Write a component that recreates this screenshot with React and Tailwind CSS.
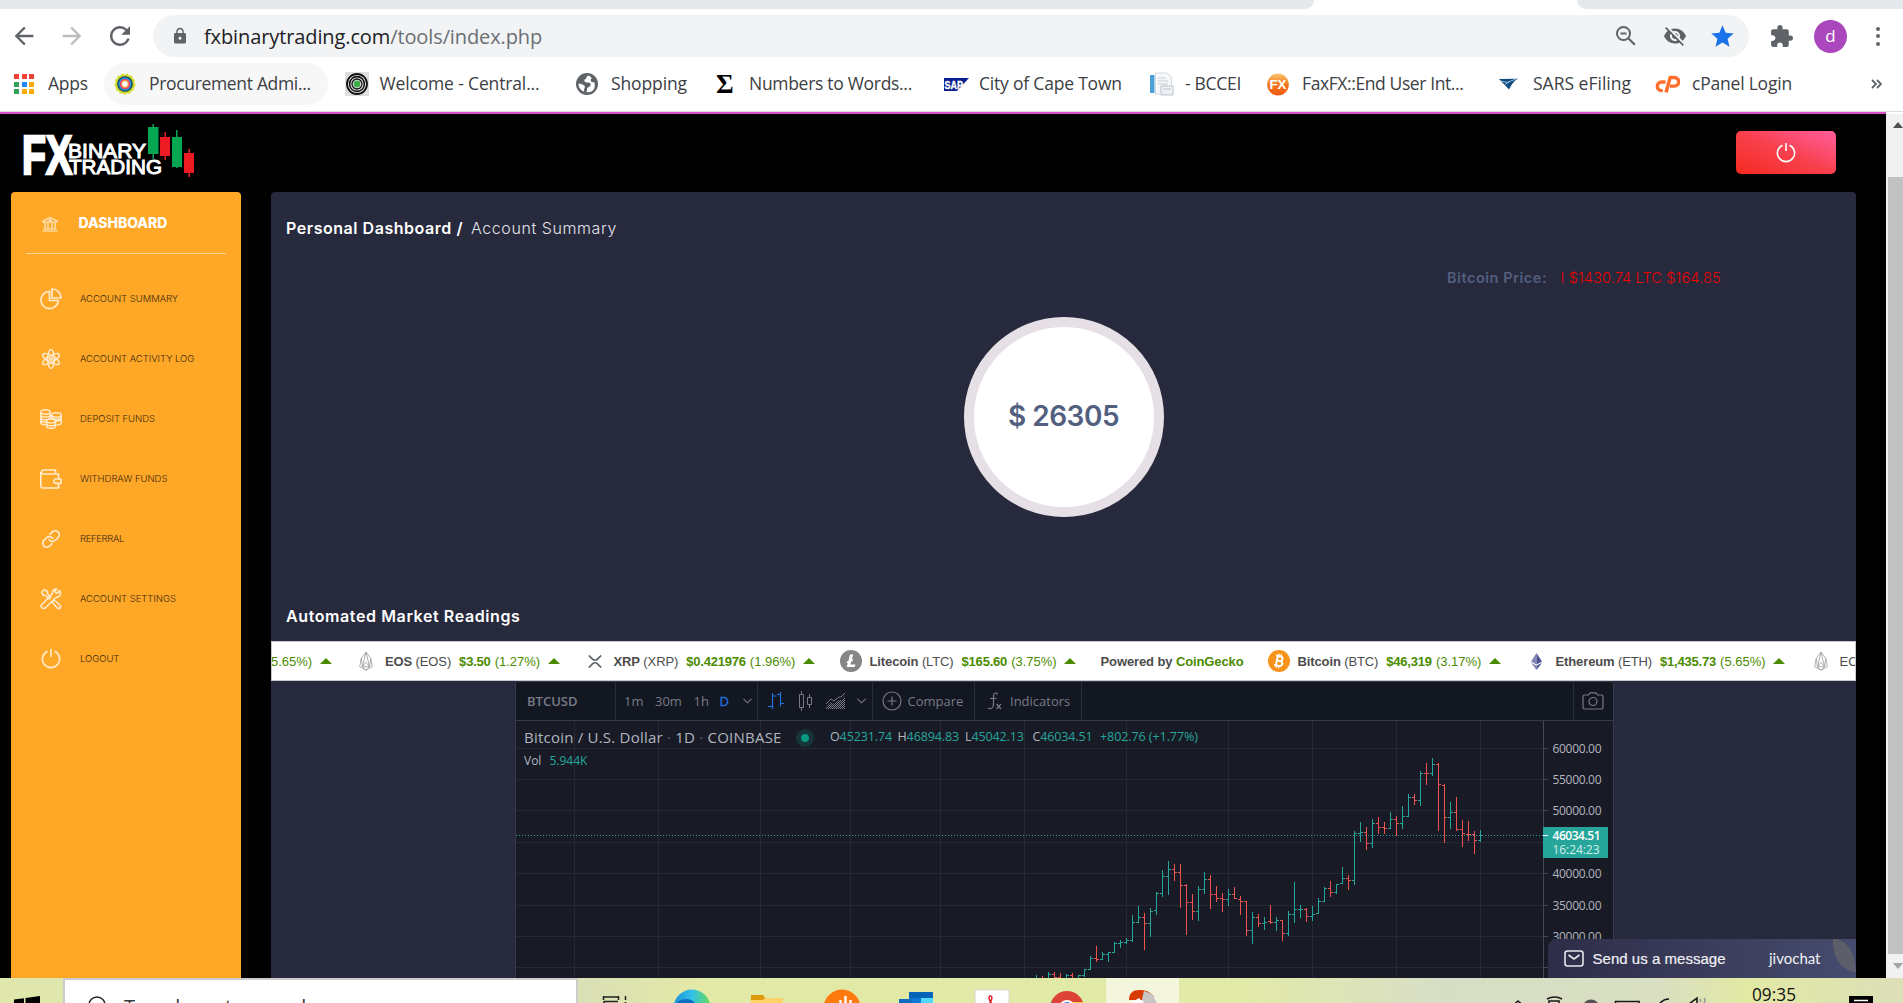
import React from "react";
import { MdLock, MdStar, MdExtension, MdVisibilityOff, MdArrowBack, MdArrowForward, MdRefresh } from "react-icons/md";

/* ---------- browser chrome ---------- */

const AppsIcon = () => (
  <svg width="20" height="20" viewBox="0 0 20 20" shapeRendering="crispEdges" className="ml-[1px]">
    {["#f44336", "#f44336", "#ea4335", "#34a05a", "#1e88f5", "#fbab05", "#34a05a", "#fbab05", "#fbab05"].map((c, i) => (
      <rect key={i} x={(i % 3) * 7.5} y={Math.floor(i / 3) * 7.5} width="5" height="5" fill={c} />
    ))}
  </svg>
);

const FlowerIcon = () => (
  <svg width="22" height="24" viewBox="0 0 24 24">
    <circle cx="12" cy="12" r="10.5" fill="#c6d420" stroke="#d9e233" strokeWidth="2" strokeDasharray="3 2" />
    <circle cx="12" cy="12" r="8.5" fill="#17466b" />
    <circle cx="12" cy="12" r="7" fill="#1ba5d8" />
    <circle cx="12" cy="12" r="5.8" fill="#e5397c" />
    <circle cx="12" cy="12" r="4.3" fill="#f7a348" />
    <circle cx="12" cy="12" r="2.9" fill="#fff" />
  </svg>
);

const RingsIcon = () => (
  <svg width="24" height="24" viewBox="0 0 24 24">
    <rect width="24" height="24" fill="#dedede" />
    <circle cx="12" cy="12" r="10" fill="#eee" stroke="#111" strokeWidth="1.8" />
    <circle cx="12" cy="12" r="7.4" fill="none" stroke="#111" strokeWidth="1.6" />
    <circle cx="12" cy="12" r="5" fill="none" stroke="#111" strokeWidth="1.3" />
    <circle cx="12" cy="12" r="3.4" fill="#3fae49" />
  </svg>
);

const GlobeIcon = () => (
  <svg width="22" height="22" viewBox="0 0 22 22">
    <circle cx="11" cy="11" r="11" fill="#5f6368" />
    <path d="M12.500 2.600c-2 .8-2.500 2-2.200 3.200-1.600.2-2.300 1-1.900 2.300.5 1.300 2 1.600 4 1.500 1.600 0 2.200.9 2.200 2.200 0 1.400-1 2-2.300 2.400-1 .4-1.300 1.300-1.200 2.400l-.6 2.600c3.800.6 6.700-1.300 7.800-4 .8-2.200.7-4-.2-6.200-1.400.4-2.800.3-3.200-.7-.5-1.400 0-2.400 1-3-1-1.300-2.200-2.200-3.400-2.700z" fill="#fff" />
    <path d="M2.600 10.400c2.400.2 4.300.9 5.600 2.200.9 1 .8 2 .2 2.800-.5.700-.3 1.800-.2 3.200-3.500-1.300-5.800-4.200-5.600-8.200z" fill="#fff" />
  </svg>
);

const SapIcon = () => (
  <svg width="25" height="13" viewBox="0 0 25 13">
    <path d="M0 0h25L13 13H0z" fill="#0a1f8f" />
    <text x="0.5" y="10.6" fontFamily="Liberation Sans, sans-serif" fontWeight="700" fontSize="11" fill="#fff" stroke="#fff" strokeWidth="0.3" textLength="18.5" lengthAdjust="spacingAndGlyphs">SAP</text>
  </svg>
);

const DocIcon = () => (
  <svg width="24" height="24" viewBox="0 0 24 24">
    <path d="M0 3h4.500v18H0z" fill="#4ba0d6" />
    <path d="M5.500 1h11l5 4v17h-16z" fill="#f5f7f9" stroke="#d3dae0" />
    <path d="M8 6h8M8 9h10M8 12h10" stroke="#c6ced6" />
    <path d="M11 14h12v9H11z" fill="#eef1f4" stroke="#b9c3cc" />
    <path d="M13 17h8" stroke="#b9c3cc" />
  </svg>
);

const FxIcon = () => (
  <svg width="22" height="23" viewBox="0 0 22 23">
    <defs>
      <linearGradient id="fxg" x1="0" y1="0" x2="0" y2="1">
        <stop offset="0" stopColor="#fbc46a" />
        <stop offset="0.55" stopColor="#f2711f" />
        <stop offset="1" stopColor="#ee5a12" />
      </linearGradient>
    </defs>
    <ellipse cx="11" cy="11.5" rx="10.8" ry="11" fill="url(#fxg)" />
    <text x="2.5" y="16" fontFamily="Liberation Sans, sans-serif" fontWeight="700" fontSize="12" fill="#fff" textLength="17" lengthAdjust="spacingAndGlyphs">FX</text>
  </svg>
);

const SarsIcon = () => (
  <svg width="21" height="12" viewBox="0 0 21 12" className="ml-[1px]">
    <path d="M0 1l19-.2c-3.500 1.500-6 5-9 10.700z" fill="#0e4c82" />
    <path d="M2 3l6 1.500 9-3.500M6 6.500l5-3" fill="none" stroke="#9fc3df" strokeWidth="0.9" />
  </svg>
);

const CpIcon = () => (
  <svg width="25" height="18" viewBox="0 0 25 18" fill="none" stroke="#ff6c2c" strokeWidth="3.4" className="-ml-[2px]">
    <path d="M10.500 7H6.600a4.300 4.300 0 0 0 0 8.600h1.200M11 17.500l4.200-15h4.200a4 4 0 0 1 0 8.600h-4.400" />
  </svg>
);

const BOOKMARKS = [
  { w: "w-[101px]", t: "tracking-[-0.21px]", label: "Apps", icon: <AppsIcon /> },
  { w: "w-[230.5px]", t: "tracking-[-0.33px]", label: "Procurement Admi...", icon: <FlowerIcon />, pill: true },
  { w: "w-[231.5px]", t: "tracking-[-0.15px]", label: "Welcome - Central...", icon: <RingsIcon /> },
  { w: "w-[138px]", t: "tracking-[-0.12px]", label: "Shopping", icon: <GlobeIcon /> },
  { w: "w-[230px]", t: "tracking-[-0.3px]", label: "Numbers to Words...", icon: <span className="pl-[2px] font-['Liberation_Serif',serif] text-[27px] font-bold leading-none text-black">Σ</span> },
  { w: "w-[206px]", t: "tracking-[-0.2px]", label: "City of Cape Town", icon: <SapIcon /> },
  { w: "w-[117px]", t: "tracking-[-0.3px]", label: "- BCCEI", icon: <DocIcon /> },
  { w: "w-[231px]", t: "tracking-[-0.4px]", label: "FaxFX::End User Int...", icon: <FxIcon /> },
  { w: "w-[159px]", t: "tracking-normal", label: "SARS eFiling", icon: <SarsIcon /> },
  { w: "w-[214px]", t: "tracking-[-0.21px]", label: "cPanel Login", icon: <CpIcon /> },
];

function BrowserBar() {
  return (
    <header className="h-[114px] bg-white font-['Open_Sans',sans-serif]">
      <div className="flex h-[9px] justify-between">
        <div className="w-[1314px] rounded-br-[9px] bg-[#e6e9ec]" />
        <div className="w-[326px] rounded-bl-[9px] bg-[#e6e9ec]" />
      </div>
      <div className="mt-[6px] flex h-[42px] items-center">
        <div className="flex w-[153px] items-center pl-[10px]">
          <MdArrowBack size={28} color="#5f6368" />
          <MdArrowForward size={28} color="#babcbe" className="ml-[20px]" />
          <MdRefresh size={30} color="#5f6368" className="ml-[19px]" />
        </div>
        <div className="flex h-full w-[1596px] items-center rounded-full bg-[#f1f3f4] pl-[18px] pr-[13px]">
          <MdLock size={18} color="#5f6368" />
          <span className="ml-[15px] mt-[2px] flex-1 text-[20px] leading-none tracking-[-0.11px] text-[#202124]">
            fxbinarytrading.com<span className="text-[#6b6f74]">/tools/index.php</span>
          </span>
          <svg width="22" height="22" viewBox="0 0 22 22" fill="none" stroke="#5f6368" strokeWidth="2">
            <circle cx="8.5" cy="8.5" r="6.5" />
            <path d="M13.3 13.3l6.5 6.5M5.5 8.5h6" />
          </svg>
          <MdVisibilityOff size={24} color="#5f6368" className="ml-[26px]" />
          <MdStar size={27} color="#1a73e8" className="ml-[22px]" />
        </div>
        <MdExtension size={25} color="#5f6368" className="ml-[20px]" />
        <div className="ml-[20px] flex h-[33px] w-[33px] items-center justify-center rounded-full bg-[#ab47bc] pb-[1px] text-[17px] leading-none text-white">d</div>
        <div className="ml-[29px] flex flex-col gap-[3.5px]">
          <i className="h-[4px] w-[4px] rounded-full bg-[#5f6368]" />
          <i className="h-[4px] w-[4px] rounded-full bg-[#5f6368]" />
          <i className="h-[4px] w-[4px] rounded-full bg-[#5f6368]" />
        </div>
      </div>
      <div className="mt-[6px] flex h-[42px] items-center pl-[13px]">
        {BOOKMARKS.map((b) => (
          <div key={b.label} className={`flex shrink-0 items-center ${b.w}`}>
            <div className={b.pill ? "-ml-[10px] flex h-[42px] w-[224px] shrink-0 items-center rounded-full bg-[#f7f7f8] pl-[10px]" : "flex items-center"}>
              <span className="flex w-[35px] shrink-0 items-center">{b.icon}</span>
              <span className={`whitespace-nowrap text-[17.5px] leading-none text-[#3c4043] ${b.t}`}>{b.label}</span>
            </div>
          </div>
        ))}
        <svg width="11" height="10" viewBox="0 0 11 10" fill="none" stroke="#5f6368" strokeWidth="1.8">
          <path d="M1 1l4 4-4 4M6 1l4 4-4 4" />
        </svg>
      </div>
      <div className="mt-[6px] h-px bg-[#dcdcdc]" />
      <div className="h-[2px] w-[1886px] bg-[#d94fc8]" />
    </header>
  );
}

/* ---------- top bar ---------- */

const Logo = () => (
  <svg width="176" height="54" viewBox="20 124 176 54">
    <g fill="#fff" stroke="#fff" fontFamily="Liberation Sans, sans-serif">
      <text x="22" y="174" fontSize="55" fontWeight="700" strokeWidth="2.600" textLength="50" lengthAdjust="spacingAndGlyphs">FX</text>
      <text x="68" y="158" fontSize="20" strokeWidth="1" textLength="78" lengthAdjust="spacingAndGlyphs">BINARY</text>
      <text x="69" y="174" fontSize="20" strokeWidth="1" textLength="93" lengthAdjust="spacingAndGlyphs">TRADING</text>
    </g>
    <g fill="#04a651">
      <path d="M148 127h10.500v27H148zM152.500 124h1.500v35h-1.500z" />
      <path d="M172 137h10v30h-10zM176 130h1.500v38H176z" />
    </g>
    <g fill="#ed1c24">
      <path d="M160 137h10v19h-10zM164.500 132h1.500v28h-1.500z" />
      <path d="M184 153h10v20h-10zM188.500 149h1.500v28h-1.500z" />
    </g>
  </svg>
);

const Power = ({ size, stroke }) => (
  <svg width={size} height={size} viewBox="0 0 20 20" fill="none" stroke={stroke} strokeWidth="1.6">
    <path d="M10 0v8M6.500 2.200a8.600 8.600 0 1 0 7 0" />
  </svg>
);

function TopBar() {
  return (
    <div className="flex h-[78px] justify-between pl-[20px] pr-[50px]">
      <div className="pt-[10px]"><Logo /></div>
      <button className="mt-[17px] flex h-[43px] w-[100px] items-center justify-center rounded-[5px] bg-linear-to-tr from-[#f5281a] via-[#f8404c] to-[#ff5c9c] pr-[1px] pt-[1px]">
        <Power size={20} stroke="#fff" />
      </button>
    </div>
  );
}

/* ---------- sidebar ---------- */

const line = { fill: "none", stroke: "#ffebcd", strokeWidth: 1.7, strokeLinejoin: "round" };

const BankIcon = () => (
  <svg width="16" height="15" viewBox="0 0 16 15" {...line} strokeWidth="1.2">
    <path d="M1 5V4l7-3.500L15 4v1zM3 5.500v6M6 5.500v6M10 5.500v6M13 5.500v6M1.500 12h13M.5 14h15" />
    <circle cx="8" cy="3.300" r="0.900" />
  </svg>
);
const PieIcon = () => (
  <svg width="22" height="22" viewBox="0 0 22 22" {...line}>
    <path d="M9.500 3.300A8.700 8.700 0 1 0 18.300 12.500H9.500zM12 1v9h9a9 9 0 0 0-9-9z" />
  </svg>
);
const AtomIcon = () => (
  <svg width="22" height="22" viewBox="0 0 22 22" {...line} strokeWidth="1.5">
    <ellipse cx="11" cy="11" rx="3.300" ry="9.500" />
    <ellipse cx="11" cy="11" rx="3.300" ry="9.500" transform="rotate(60 11 11)" />
    <ellipse cx="11" cy="11" rx="3.300" ry="9.500" transform="rotate(120 11 11)" />
    <circle cx="11" cy="11" r="1.300" />
  </svg>
);
const CoinsIcon = () => (
  <svg width="22" height="20" viewBox="0 0 22 20" {...line} strokeWidth="1.5">
    <ellipse cx="5.500" cy="3" rx="4.700" ry="2.200" />
    <path d="M.8 3v10.500c0 1.300 2 2.300 4.700 2.300M10.200 3v7M.8 5.700c0 3 9.400 3 9.400 0M.8 8.400c0 3 9.400 3 9.400 0M.8 11c0 2 3 2.300 5 2" />
    <ellipse cx="16.500" cy="6" rx="4.700" ry="2.200" />
    <path d="M21.200 6v7.700c0 1.300-2 2.300-4.700 2.300M11.800 6v4M11.800 8.500c1 2.500 9.400 2.500 9.400 0M14 11.800c3 .6 7.200 0 7.200-1.500" />
    <ellipse cx="11" cy="12" rx="4.500" ry="2" />
    <path d="M6.500 12v5c0 3 9 3 9 0v-5M6.500 14.500c0 3 9 3 9 0" />
  </svg>
);
const WalletIcon = () => (
  <svg width="22" height="20" viewBox="0 0 22 20" {...line} strokeWidth="1.6">
    <path d="M15.500 4V1H3a2.100 2.100 0 0 0 0 4h15.500v5M18.500 14.500v4.500H3A2.200 2.200 0 0 1 .8 16.800V3" />
    <path d="M21 10h-5a2.200 2.200 0 0 0 0 4.400h5z" />
  </svg>
);
const LinkIcon = () => (
  <svg width="22" height="22" viewBox="0 0 22 22" {...line}>
    <g transform="rotate(-45 11 11)">
      <path d="M9 15H5a4 4 0 0 1 0-8h3.800a4 4 0 0 1 3.700 5.400" />
      <path d="M13 7h4a4 4 0 0 1 0 8h-3.800a4 4 0 0 1-3.700-5.400" />
    </g>
  </svg>
);
const ToolsIcon = () => (
  <svg width="22" height="22" viewBox="0 0 22 22" {...line} strokeWidth="1.6">
    <path d="M1.500 4.200L4.200 1.500l3.300 2v2.200L11 9.300 9.300 11 5.700 7.500H3.500z" />
    <path d="M14 12l6 5.200a1.900 1.900 0 0 1-2.700 2.700L12 14.200z" />
    <path d="M19.800 2.600l-2.700 2.500-1.800-.5L15 2.900 17 1.200c-3-.6-5.300 1.700-4.500 4.400L2 16.200a2.400 2.400 0 0 0 3.500 3.500L16.200 9.200c3.300.6 5.300-3 3.600-6.600z" />
  </svg>
);

const MENU = [
  ["ACCOUNT SUMMARY", <PieIcon />],
  ["ACCOUNT ACTIVITY LOG", <AtomIcon />],
  ["DEPOSIT FUNDS", <CoinsIcon />],
  ["WITHDRAW FUNDS", <WalletIcon />],
  ["REFERRAL", <LinkIcon />, "tracking-[-0.35px]"],
  ["ACCOUNT SETTINGS", <ToolsIcon />],
  ["LOGOUT", <Power size={20} stroke="#ffebcd" />],
];

function Sidebar() {
  return (
    <nav className="w-[230px] shrink-0 rounded-t-[4px] bg-[#ffa726] font-['Inter',sans-serif]">
      <div className="mx-[15px] flex h-[62px] items-center border-b border-[#ffd79c] pl-[16px]">
        <span className="mt-[3px]"><BankIcon /></span>
        <span className="ml-[20.500px] mt-[1px] text-[14px] font-extrabold leading-none tracking-[-0.05px] text-white">DASHBOARD</span>
      </div>
      <div className="pt-[15px]">
        {MENU.map(([label, icon, tracking]) => (
          <div key={label} className="flex h-[60px] items-center">
            <span className="ml-[29px] flex w-[22px] justify-center">{icon}</span>
            <span className={`ml-[18px] text-[9.5px] font-light leading-none text-[#3d2a10] ${tracking || "tracking-[-0.04px]"}`}>{label}</span>
          </div>
        ))}
      </div>
    </nav>
  );
}

/* ---------- ticker ---------- */

const EosIcon = () => (
  <svg width="14" height="22" viewBox="0 0 16 22" fill="none" stroke="#9a9a9a" strokeWidth="0.9">
    <path d="M8 .7L2.500 8 .8 17.500 8 21.500l7.200-4L13.500 8zM8 .7L4 17.500M8 .7l4 16.800M2.500 8L4 17.500l4 4M13.500 8L12 17.500l-4 4M4 17.500l4-5 4 5z" />
  </svg>
);
const XrpIcon = () => (
  <svg width="14" height="13" viewBox="0 0 14 13" fill="none" stroke="#5d6266" strokeWidth="1.7">
    <path d="M.8.5l3.700 3.700a3.500 3.500 0 0 0 5 0L13.200.5M.8 12.500l3.700-3.700a3.500 3.500 0 0 1 5 0l3.700 3.700" />
  </svg>
);
const LtcIcon = () => (
  <svg width="22" height="22" viewBox="0 0 22 22">
    <circle cx="11" cy="11" r="11" fill="#868686" />
    <path d="M10 4.500h3.200l-1.500 5.300 1.600-.7-.5 1.800-1.600.7-.8 2.900h5l-.6 2.500H6.700l1.200-4.300-1.400.6.500-1.900 1.400-.5z" fill="#fff" />
  </svg>
);
const BtcIcon = () => (
  <svg width="22" height="22" viewBox="0 0 22 22">
    <circle cx="11" cy="11" r="11" fill="#f7931a" />
    <g fill="none" stroke="#fff" strokeWidth="1.900" transform="rotate(12 11 11)">
      <path d="M7 6.200h4.700a2.300 2.300 0 0 1 0 4.600H8.800V6M8.800 10.800h3.500a2.500 2.500 0 0 1 0 5H7M8.800 10v6" />
      <path d="M9.500 3.800v2.500M12 3.800v2.500M9.500 15.800v2.500M12 15.800v2.500" strokeWidth="1.300" />
    </g>
  </svg>
);
const EthIcon = () => (
  <svg width="11" height="17" viewBox="0 0 11 17">
    <path d="M5.500 0v11.500L0 8.500z" fill="#8087b5" />
    <path d="M5.500 0v11.500l5.500-3z" fill="#4b5190" />
    <path d="M0 9.700l5.500 3V17z" fill="#8087b5" />
    <path d="M11 9.700l-5.500 3V17z" fill="#4b5190" />
  </svg>
);
const Up = () => (
  <svg width="12" height="6" viewBox="0 0 12 6" className="ml-[7.500px]">
    <path d="M0 6l6-6 6 6z" fill="#4b8b00" />
  </svg>
);

const Coin = ({ w, icon, name, sym, price, pct }) => (
  <div className={`flex shrink-0 items-center ${w}`}>
    <span className="mr-[8px] flex w-[22px] shrink-0 justify-center">{icon}</span>
    <span className="tracking-[-0.12px]"><b>{name}</b> ({sym})</span>
    <b className="ml-[8px] tracking-[-0.2px] text-[#4b8b00]">{price}</b>
    <span className="ml-[4px] text-[#4b8b00]">({pct}%)</span>
    <Up />
  </div>
);

function Ticker() {
  return (
    <div className="flex h-[40px] items-center overflow-hidden whitespace-nowrap border border-[#c9c9cf] bg-white font-['Liberation_Sans',sans-serif] text-[13px] leading-none text-[#4c4c4c]">
      <div className="-ml-px flex w-[84px] shrink-0 items-center text-[#4b8b00]">5.65%)<Up /></div>
      <Coin w="w-[228.5px]" icon={<EosIcon />} name="EOS" sym="EOS" price="$3.50" pct="1.27" />
      <Coin w="w-[256px]" icon={<XrpIcon />} name="XRP" sym="XRP" price="$0.421976" pct="1.96" />
      <Coin w="w-[261px]" icon={<LtcIcon />} name="Litecoin" sym="LTC" price="$165.60" pct="3.75" />
      <div className="w-[167px] shrink-0 font-bold tracking-[-0.11px]">Powered by <span className="text-[#4b8b00]">CoinGecko</span></div>
      <Coin w="w-[258px]" icon={<BtcIcon />} name="Bitcoin" sym="BTC" price="$46,319" pct="3.17" />
      <Coin w="w-[284px]" icon={<EthIcon />} name="Ethereum" sym="ETH" price="$1,435.73" pct="5.65" />
      <span className="mr-[8px] flex w-[22px] shrink-0 justify-center"><EosIcon /></span>
      <span className="shrink-0">EO</span>
    </div>
  );
}

/* ---------- chart ---------- */

// [x, high, low, open, close] in thirds of a pixel, measured from the plot origin
const BARS = [
  [49, 705, 730, 722, 718], [67, 708, 730, 718, 720], [85, 696, 718, 720, 703], [103, 696, 715, 703, 712], [121, 699, 718, 712, 716],
  [139, 702, 718, 716, 706], [157, 699, 718, 706, 716], [175, 706, 718, 716, 706], [193, 687, 711, 706, 688], [211, 648, 690, 688, 655],
  [229, 618, 666, 655, 658], [247, 636, 660, 658, 643], [265, 636, 666, 643, 637], [283, 606, 639, 637, 610], [301, 600, 624, 610, 607],
  [319, 594, 612, 607, 601], [337, 525, 606, 601, 547], [355, 498, 549, 547, 532], [373, 519, 630, 532, 550], [391, 504, 591, 550, 514],
  [409, 456, 525, 511, 460], [427, 390, 471, 460, 409], [445, 363, 465, 409, 388], [463, 372, 423, 388, 397], [481, 372, 504, 397, 436],
  [499, 432, 585, 436, 487], [517, 462, 540, 487, 514], [535, 438, 543, 514, 448], [553, 396, 462, 448, 418], [571, 405, 507, 418, 463],
  [589, 438, 486, 463, 475], [607, 459, 516, 475, 478], [625, 447, 498, 478, 463], [643, 441, 477, 463, 475], [661, 468, 525, 478, 484],
  [679, 483, 588, 484, 571], [697, 516, 612, 571, 532], [715, 522, 561, 532, 550], [733, 531, 570, 550, 547], [751, 495, 552, 544, 547],
  [769, 531, 573, 547, 541], [787, 540, 603, 541, 580], [805, 513, 588, 580, 523], [823, 426, 549, 523, 508], [841, 495, 534, 509, 508],
  [859, 504, 546, 508, 529], [877, 498, 543, 529, 523], [895, 474, 522, 520, 484], [913, 441, 486, 484, 445], [931, 423, 471, 445, 457],
  [949, 432, 462, 457, 433], [967, 381, 432, 430, 415], [985, 405, 450, 415, 421], [1003, 273, 435, 421, 280], [1021, 246, 306, 280, 277],
  [1039, 261, 330, 277, 310], [1057, 237, 324, 310, 250], [1075, 231, 282, 250, 262], [1093, 246, 282, 262, 265], [1111, 216, 267, 265, 238],
  [1129, 228, 288, 238, 250], [1147, 198, 267, 250, 229], [1165, 162, 231, 229, 172], [1183, 162, 195, 172, 181], [1201, 93, 198, 181, 100],
  [1219, 69, 135, 100, 101], [1237, 54, 108, 100, 73], [1255, 69, 273, 73, 133], [1273, 132, 309, 136, 232], [1291, 186, 267, 232, 217],
  [1309, 171, 273, 217, 268], [1327, 240, 321, 268, 280], [1345, 243, 303, 283, 284], [1363, 273, 342, 283, 301], [1381, 270, 306, 301, 286],
];
const GRID_X = [574.5, 658.5, 760.5, 850.5, 940.5, 1024.5, 1126.5, 1228.5, 1312.5, 1396.5, 1480.5];
const GRID_Y = [748.5, 779.5, 810.5, 842.5, 873.5, 905.5, 936.5, 967.5];
const PRICES = [[748.5, "60000.00"], [779.5, "55000.00"], [810.5, "50000.00"], [873.5, "40000.00"], [905.5, "35000.00"], [936.5, "30000.00"]];

const Plot = () => (
  <svg width="1097" height="257" viewBox="516 721 1097 257" className="block">
    <g stroke="#252936" shapeRendering="crispEdges">
      {GRID_X.map((x) => <path key={x} d={`M${x} 721V978`} />)}
      {GRID_Y.map((y) => <path key={y} d={`M516 ${y}H1543`} />)}
    </g>
    <g stroke="#454955" shapeRendering="crispEdges">
      <path d="M1543.500 721V978" />
      {GRID_Y.map((y) => <path key={y} d={`M1544 ${y}h4`} />)}
    </g>
    <path d="M516 835.500H1543" stroke="#26a69a" strokeDasharray="1 2" shapeRendering="crispEdges" />
    <g fill="none" strokeWidth="3" transform="translate(1020 740) scale(.33333)" shapeRendering="crispEdges">
      {BARS.map(([x, h, l, o, c]) => (
        <path key={x} stroke={c < o ? "#26a69a" : "#ef5350"} d={`M${x + 0.5} ${h}V${l}M${x - 7} ${o + 0.5}H${x}M${x} ${c + 0.5}h7`} />
      ))}
    </g>
    <g fontFamily="Open Sans, sans-serif" fontSize="12" fill="#b2b5be">
      {PRICES.map(([y, p]) => <text key={p} x="1552.500" y={y + 4.500} textLength="49">{p}</text>)}
      <path d="M1543 827h64a1 1 0 0 1 1 1v29a1 1 0 0 1-1 1h-64z" fill="#26a69a" />
      <path d="M1543 835.500h5" stroke="#fff" />
      <text x="1552.500" y="840" fontWeight="600" fill="#fff" textLength="48">46034.51</text>
      <text x="1552.500" y="854" fill="#d4efec" textLength="47">16:24:23</text>
    </g>
  </svg>
);

const Chevron = () => (
  <svg width="9" height="6" viewBox="0 0 9 6" fill="none" stroke="#787b86" strokeWidth="1.1"><path d="M.5.8l4 4 4-4" /></svg>
);

const Ohlc = ({ k, v }) => (
  <span className="w-[67.500px] text-[12.500px] tracking-[-0.12px] text-[#26a69a]"><span className="text-[#b2b5be]">{k}</span>{v}</span>
);

function Chart() {
  return (
    <div className="ml-[244px] h-[297px] w-[1099px] overflow-hidden rounded-t-[3px] border border-b-0 border-[#363a45] bg-[#181b26] font-['Open_Sans',sans-serif] leading-none">
      <div className="flex h-[39px] border-b border-[#363a45] bg-[#131722] text-[13px] text-[#787b86]">
        <div className="flex w-[100px] items-center border-r border-[#2a2e39] pl-[11px] font-semibold">BTCUSD</div>
        <div className="flex w-[142px] items-center border-r border-[#2a2e39] pl-[8px]">
          <span className="w-[31px]">1m</span><span className="w-[38.500px]">30m</span><span className="w-[26px]">1h</span>
          <span className="w-[23px] text-[#2174e0] [-webkit-text-stroke:0.3px]">D</span><Chevron />
        </div>
        <div className="flex w-[115px] items-center border-r border-[#2a2e39] pl-[10px]">
          <svg width="17" height="20" viewBox="0 0 17 20" fill="none" stroke="#2174e0" strokeWidth="1.200"><path d="M4.500 2v16M0 15.500h4.500M4.500 5h4M12.500 1v14.500M9 3.500h3.500M12.500 12.500H16" /></svg>
          <svg width="15" height="20" viewBox="0 0 15 20" fill="none" stroke="#787b86" className="ml-[13px]"><path d="M1.500 3.500h4v13h-4zM3.500 0v3.500M3.500 16.500V20M9.500 6.500h4v7h-4zM11.500 3v3.500M11.500 13.500V17" /></svg>
          <svg width="21" height="16" viewBox="0 0 21 16" className="ml-[12px]">
            <defs><pattern id="hatch" width="2" height="2" patternUnits="userSpaceOnUse"><path d="M0 0h1v1H0zM1 1h1v1H1z" fill="#787b86" /></pattern></defs>
            <path d="M1 14l5-5 3 2 5-4 3 0 3-4v13H1z" fill="url(#hatch)" /><path d="M1 11l5-5 3 2 5-4 2 0 4-4" fill="none" stroke="#787b86" />
          </svg>
          <span className="ml-[11px]"><Chevron /></span>
        </div>
        <div className="flex w-[102px] items-center border-r border-[#2a2e39] pl-[8.500px]">
          <svg width="20" height="20" viewBox="0 0 20 20" fill="none" stroke="#787b86" strokeWidth="1.200"><circle cx="10" cy="10" r="9" /><path d="M10 5.500v9M5.500 10h9" /></svg>
          <span className="ml-[6px]">Compare</span>
        </div>
        <div className="flex w-[107px] items-center border-r border-[#2a2e39] pl-[12px]">
          <svg width="15" height="18" viewBox="0 0 15 18" fill="none" stroke="#787b86" strokeWidth="1.200"><path d="M10.500 2.500C10 .3 6.500.3 6.500 3.500v9c0 4-3.500 4.800-5.500 3.500M3 6.500h6.500M9.500 12l4.500 5M14 12l-4.500 5" /></svg>
          <span className="ml-[8px]">Indicators</span>
        </div>
        <div className="ml-auto flex w-[40px] items-center border-l border-[#2a2e39] pl-[8px]">
          <svg width="22" height="18" viewBox="0 0 22 18" fill="none" stroke="#787b86" strokeWidth="1.200"><path d="M2.500 3h4l1.500-2.200h6L15.500 3h4a1.500 1.500 0 0 1 1.500 1.500v11a1.500 1.500 0 0 1-1.500 1.500h-17A1.500 1.500 0 0 1 1 15.500v-11A1.500 1.500 0 0 1 2.500 3z" /><circle cx="11" cy="9.500" r="4" /></svg>
        </div>
      </div>
      <div className="relative">
        <Plot />
        <div className="absolute left-[8px] top-[6.500px] text-[#b2b5be]">
          <div className="flex h-[20px] items-center whitespace-nowrap">
            <span className="w-[272px] text-[15px] tracking-[0.22px]">Bitcoin / U.S. Dollar <span className="text-[#5d606b]">·</span> 1D <span className="text-[#5d606b]">·</span> COINBASE</span>
            <span className="mr-[16px] flex h-[18px] w-[18px] items-center justify-center rounded-full bg-[#17343b]"><i className="h-[8px] w-[8px] rounded-full bg-[#089981]" /></span>
            <Ohlc k="O" v="45231.74" /><Ohlc k="H" v="46894.83" /><Ohlc k="L" v="45042.13" /><Ohlc k="C" v="46034.51" />
            <span className="text-[12.500px] tracking-[-0.07px] text-[#26a69a]">+802.76 (+1.77%)</span>
          </div>
          <div className="mt-[3.500px] flex h-[20px] items-center text-[12px]">Vol<span className="ml-[8px] text-[#26a69a]">5.944K</span></div>
        </div>
      </div>
    </div>
  );
}

/* ---------- main panel ---------- */

function MainPanel() {
  return (
    <main className="ml-[30px] w-[1585px] shrink-0 overflow-hidden rounded-t-[4px] bg-[#27293d] font-['Inter',sans-serif]">
      <div className="flex h-[71px] items-center pl-[15px] text-[16px] leading-none">
        <span className="font-semibold tracking-[0.54px] text-white">Personal Dashboard /</span>
        <span className="ml-[8px] font-light tracking-[0.58px] text-[#e4e4ea]">Account Summary</span>
      </div>
      <div className="flex h-[30px] items-center pl-[1176px] text-[14.500px] leading-none">
        <span className="w-[113.500px] font-semibold tracking-[0.53px] text-[#525f7f]">Bitcoin Price:</span>
        <span className="font-light tracking-[0.13px] text-[#f00000]">I $1430.74 LTC $164.85</span>
      </div>
      <div className="ml-[693px] mt-[24px] flex h-[200px] w-[200px] items-center justify-center rounded-full border-[10px] border-[#e6e0e6] bg-white pb-[2px] pr-[1px] text-[28px] font-semibold leading-none tracking-[-0.5px] text-[#525f7f]">$ 26305</div>
      <h2 className="mt-[84px] flex h-[30px] items-center pl-[15px] text-[16px] font-semibold leading-none tracking-[0.6px] text-white">Automated Market Readings</h2>
      <div className="mt-[10px]"><Ticker /></div>
      <Chart />
    </main>
  );
}

const ChatWidget = () => (
  <div className="absolute bottom-0 right-[30px] flex h-[39px] w-[308px] items-center overflow-hidden rounded-tl-[9px] bg-linear-to-r from-[#2e2d48] to-[#464c6e] pl-[16px] font-['Liberation_Sans',sans-serif] text-[15px] leading-none text-[#f0f0f4]">
    <svg width="20" height="17" viewBox="0 0 20 17" fill="none" stroke="#e8e8ee" strokeWidth="1.600"><rect x="1" y="1" width="18" height="15" rx="2.500" /><path d="M4.500 5l5.500 4 5.500-4" /></svg>
    <span className="ml-[8.500px] w-[176.500px] tracking-[0.03px] [-webkit-text-stroke:0.2px]">Send us a message</span>
    <span className="font-['Lato',sans-serif]">jivochat</span>
    <svg width="23" height="33" viewBox="0 0 23 33" className="absolute right-0 top-0"><path d="M0 0h3c12 2 19 14 20 33C10 32-1 20 0 0z" fill="#5c5e69" /></svg>
  </div>
);

const Scrollbar = () => (
  <div className="flex w-[17px] shrink-0 flex-col items-center bg-[#f1f1f1]">
    <svg width="17" height="63" viewBox="0 0 17 63"><path d="M7 14h10l-5-6z" fill="#505050" /></svg>
    <div className="ml-[2px] h-[777px] w-[15px] bg-[#c1c1c1]" />
    <svg width="17" height="24" viewBox="0 0 17 24"><path d="M7 9h10l-5 6z" fill="#a3a3a3" /></svg>
  </div>
);

/* ---------- taskbar ---------- */

function Taskbar() {
  return (
    <footer className="flex h-[25px] overflow-hidden bg-[#e0e7ac]">
      <div className="w-[63px] shrink-0 pl-[14px] pt-[18px]">
        <svg width="26" height="26" viewBox="0 0 26 26"><path d="M0 3.500l10-1.300V12H0zM11.500 2L26 0v12H11.500zM0 13.500h26V26L0 23z" /></svg>
      </div>
      <div className="flex h-[60px] w-[515px] shrink-0 border-2 border-[#cccccc] bg-white pl-[23px] font-['Open_Sans',sans-serif] text-[20px] leading-none tracking-[0.31px] text-[#3a3a3a]">
        <svg width="18" height="24" viewBox="0 0 18 24" fill="none" stroke="#222" strokeWidth="1.500" className="mt-[16px]"><circle cx="9" cy="9" r="8" /></svg>
        <span className="ml-[18px] mt-[17px]">Type here to search</span>
      </div>
      <svg width="1325" height="25" viewBox="578 978 1325 25" className="shrink-0">
        <defs>
          <linearGradient id="sky" x1="0" x2="1">
            <stop offset="0" stopColor="#dadfb6" /><stop offset="0.090" stopColor="#e2e9a6" /><stop offset="0.500" stopColor="#e2eaa8" />
            <stop offset="0.650" stopColor="#d8dec6" /><stop offset="0.820" stopColor="#d9dfc0" /><stop offset="0.880" stopColor="#e2e9a3" /><stop offset="1" stopColor="#dcdfb8" />
          </linearGradient>
          <linearGradient id="edge" x1="0" x2="1"><stop offset="0" stopColor="#1b8fd8" /><stop offset="0.500" stopColor="#33c1e8" /><stop offset="1" stopColor="#63dd55" /></linearGradient>
        </defs>
        <rect x="578" y="978" width="1325" height="25" fill="url(#sky)" />
        <path d="M603 997h16M604 1001.500h14M603.500 996v4M618.500 996v4M604 1003v-2M625.500 996v4M625.500 1002v2" stroke="#222" strokeWidth="1.500" fill="none" />
        <circle cx="692" cy="1008" r="18.500" fill="url(#edge)" /><ellipse cx="686" cy="1006" rx="10" ry="7" fill="#0e6fc0" />
        <path d="M751 995h12l3 3h17v8h-32z" fill="#fcd26a" /><path d="M751 995h12l2 3-2 2h-12z" fill="#dc9a0a" />
        <circle cx="842" cy="1008" r="18.500" fill="#ff7a0c" /><path d="M840.500 1003v-3M845.500 1003v-7M850.500 1003v-3" stroke="#fff" strokeWidth="2.500" />
        <path d="M909 992h24v6h-24z" fill="#0364b8" /><path d="M909 998h12v6h-12z" fill="#0f78d4" /><path d="M921 998h12v6h-12z" fill="#50d9ff" /><path d="M899 999h13v5h-13z" fill="#0f6cbd" />
        <path d="M975 990h34v14h-34z" fill="#fff" stroke="#d8d8d0" /><path d="M989.500 1004c3-5 3-8 .8-8s-1.500 5 2 8" fill="none" stroke="#e3202c" strokeWidth="1.500" />
        <circle cx="1067" cy="1008" r="17" fill="#db4437" /><path d="M1050 1008q0-3 1.500-6l6 6z" fill="#1c9d56" /><path d="M1084 1008q0-3-1-6h-14v4z" fill="#ffcd40" /><circle cx="1067" cy="1008" r="8" fill="#fff" /><circle cx="1067" cy="1008" r="6" fill="#4285f4" />
        <rect x="1106" y="978" width="73" height="25" fill="#f3f5dd" />
        <path d="M1129 1000c0-7 4-10 10-10 6 0 11 1 15 7l-12 3h-13z" fill="#d83b01" /><path d="M1144 991l8 3 5 9h-13l-2-4z" fill="#c9c5c4" /><path d="M1131 1003l8-5 4 5z" fill="#fff" />
        <g fill="none" stroke="#1a1a1a" strokeWidth="1.600">
          <path d="M1515 1003.500l3-2.500 3 2.500M1547 999q8-4 15 0M1549 1003v-2h10v2M1615 1001.500h24v4M1615.500 1001v4M1660 1003q4-4 9-4M1689 1004l8-6v6" />
          <path d="M1700 1002q1-1 0-3M1704 1003q2-3 0-5" stroke="#999" />
        </g>
        <circle cx="1591" cy="1008" r="8.500" fill="#555" />
        <text x="1752" y="1000.500" fontFamily="Open Sans, sans-serif" fontWeight="400" fontSize="18" textLength="44" lengthAdjust="spacingAndGlyphs" fill="#111">09:35</text>
        <path d="M1849 996h24v8h-24z" fill="#000" /><path d="M1854 1000.500h14" stroke="#fff" strokeWidth="1.500" />
      </svg>
    </footer>
  );
}

export default function App() {
  return (
    <div className="h-[1003px] w-[1903px] overflow-hidden bg-black">
      <BrowserBar />
      <div className="flex h-[864px]">
        <div className="relative flex w-[1886px] flex-col overflow-hidden">
          <TopBar />
          <div className="flex h-[786px] shrink-0 pl-[11px]">
            <Sidebar />
            <MainPanel />
          </div>
          <ChatWidget />
        </div>
        <Scrollbar />
      </div>
      <Taskbar />
    </div>
  );
}
